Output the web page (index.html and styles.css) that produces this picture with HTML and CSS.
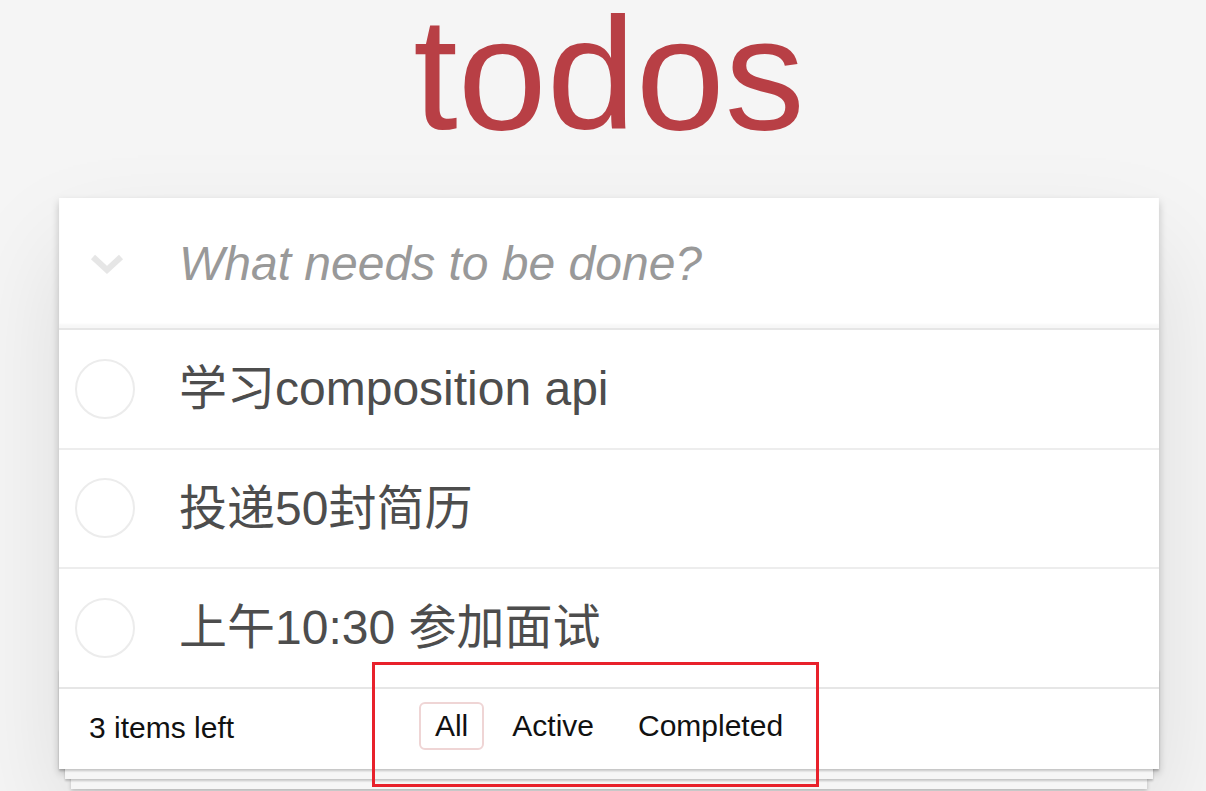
FILE: index.html
```html
<!DOCTYPE html>
<html lang="zh-CN">
<head>
<meta charset="utf-8">
<title>todos</title>
<link rel="stylesheet" href="styles.css">
</head>
<body>
<section class="app">
  <h1 class="title">todos</h1>
  <div class="card">
    <header class="new-row">
      <span class="toggle-all">
        <svg width="34" height="22" viewBox="0 0 34 22"><polyline points="3,4 17,17 31,4" fill="none" stroke="#e6e6e6" stroke-width="6"/></svg>
      </span>
      <input class="new-todo" placeholder="What needs to be done?">
    </header>
    <ul class="todo-list">
      <li class="todo">
        <span class="toggle"><svg width="62" height="62" viewBox="0 0 62 62"><circle cx="31" cy="31" r="29" fill="none" stroke="#ececec" stroke-width="2"/></svg></span>
        <label class="label">学习composition api</label>
      </li>
      <li class="todo">
        <span class="toggle"><svg width="62" height="62" viewBox="0 0 62 62"><circle cx="31" cy="31" r="29" fill="none" stroke="#ececec" stroke-width="2"/></svg></span>
        <label class="label">投递50封简历</label>
      </li>
      <li class="todo">
        <span class="toggle"><svg width="62" height="62" viewBox="0 0 62 62"><circle cx="31" cy="31" r="29" fill="none" stroke="#ececec" stroke-width="2"/></svg></span>
        <label class="label">上午10:30 参加面试</label>
      </li>
    </ul>
    <footer class="footer">
      <span class="count">3 items left</span>
      <ul class="filters">
        <li><a class="filter selected">All</a></li>
        <li><a class="filter">Active</a></li>
        <li><a class="filter">Completed</a></li>
      </ul>
      <span></span>
    </footer>
  </div>
</section>
<div class="annotation"></div>
</body>
</html>
```
FILE: styles.css
```css
html, body {
  margin: 0;
  padding: 0;
}
body {
  background: #f5f5f5;
  font-family: "Liberation Sans", "Noto Sans CJK SC", Arial, sans-serif;
  color: #111;
  overflow: hidden;
  height: 791px;
}
.app {
  width: 1100px;
  margin-left: 59px;
  padding-top: 1px;
}
.title {
  margin: -19px 0 0 0;
  font-size: 160px;
  line-height: 184px;
  font-weight: 400;
  text-align: center;
  color: #b83f45;
}
.card {
  margin-top: 32px;
  background: #fff;
  position: relative;
  box-shadow: 0 4px 8px 0 rgba(0,0,0,0.2), 0 50px 100px 0 rgba(0,0,0,0.1);
}
.new-row {
  display: flex;
  align-items: center;
  padding: 32px 32px 32px 0;
  box-shadow: inset 0 -4px 2px rgba(0,0,0,0.03);
}
.toggle-all {
  width: 120px;
  box-sizing: border-box;
  padding-left: 31px;
  display: flex;
  align-items: center;
}
.toggle-all svg { display: block; margin-top: 2px; }
.new-todo {
  flex: 1;
  border: none;
  outline: none;
  padding: 0;
  margin: 0;
  height: 66px;
  font-family: inherit;
  font-size: 48px;
  color: #4d4d4d;
  background: transparent;
}
.new-todo::placeholder {
  font-style: italic;
  color: #999;
}
.todo-list {
  list-style: none;
  margin: 0;
  padding: 0;
  border-top: 2px solid #e6e6e6;
}
.todo {
  display: flex;
  align-items: center;
  border-bottom: 2px solid #ededed;
}
.todo:last-child { border-bottom: none; }
.toggle {
  width: 120px;
  box-sizing: border-box;
  padding-left: 15px;
  display: flex;
  align-items: center;
}
.toggle svg { display: block; }
.label {
  padding: 30px 30px 30px 0;
  font-size: 48px;
  line-height: 57.5px;
  color: #4d4d4d;
}
.footer {
  position: relative;
  border-top: 2px solid #e6e6e6;
  padding: 20px 30px;
  height: 40px;
  display: grid;
  grid-template-columns: 1fr auto 1fr;
  grid-template-rows: 40px;
  align-items: start;
  font-size: 30px;
  color: #111;
}
.footer::before {
  content: "";
  position: absolute;
  left: 0;
  right: 0;
  bottom: 0;
  height: 100px;
  pointer-events: none;
  box-shadow: 0 2px 2px rgba(0,0,0,0.2),
              0 16px 0 -6px #f6f6f6,
              0 18px 2px -6px rgba(0,0,0,0.2),
              0 32px 0 -12px #f6f6f6,
              0 34px 4px -12px rgba(0,0,0,0.2);
}
.count {
  line-height: 40px;
  margin-top: -1px;
}
.filters {
  list-style: none;
  margin: -13px 0 0 0;
  padding: 0;
  display: flex;
}
.filter {
  display: block;
  margin: 6px;
  padding: 6px 14px;
  border: 2px solid transparent;
  border-radius: 6px;
  line-height: 32px;
  font-size: 30px;
  color: #111;
}
.filter.selected {
  border-color: #efd5d5;
}
.annotation {
  position: absolute;
  left: 372px;
  top: 662px;
  width: 441px;
  height: 119px;
  border: 3px solid #e8212b;
}
```
